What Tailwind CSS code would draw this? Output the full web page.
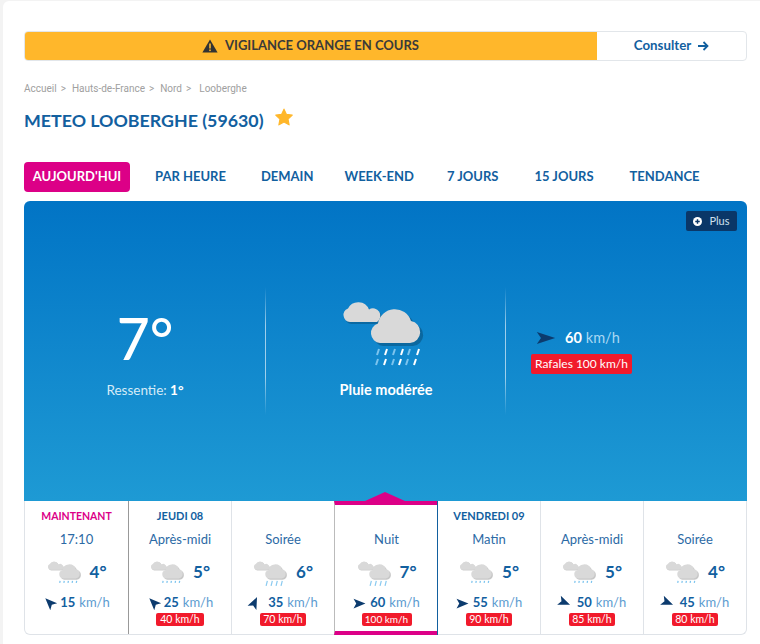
<!DOCTYPE html>
<html><head><meta charset="utf-8">
<script src="https://cdn.jsdelivr.net/npm/@tailwindcss/browser@4"></script>
</head>
<body class="bg-[#f3f3f3] overflow-hidden">
<svg width="0" height="0" class="absolute">
  <defs>
    <symbol id="c" viewBox="0 0 88 70">
      <path d="M8 21A7 7 0 0 1 6 7.500A11.500 11.500 0 0 1 27 8.500A6.500 6.500 0 0 1 35 21z" transform="translate(1.500 2)" fill="#000" fill-opacity=".2"/>
      <path d="M8 21A7 7 0 0 1 6 7.500A11.500 11.500 0 0 1 27 8.500A6.500 6.500 0 0 1 35 21z" fill="#d9d9d9"/>
      <path d="M38 42A10 10 0 0 1 36 22.500A17 17 0 0 1 69 20A11.100 11.100 0 0 1 68 42z" transform="translate(3 3)" fill="#000" fill-opacity=".22"/>
      <path d="M38 42A10 10 0 0 1 36 22.500A17 17 0 0 1 69 20A11.100 11.100 0 0 1 68 42z" fill="#d9d9d9"/>
    </symbol>
    <symbol id="s1" viewBox="0 0 88 70">
      <use href="#c" width="88" height="70"/>
      <path d="M31 48 30 53M41 48 40 53M51 48 50 53M61 48 60 53M71 48 70 53" stroke="#7cc4ee" stroke-width="3"/>
    </symbol>
    <symbol id="s2" viewBox="0 0 88 70">
      <use href="#c" width="88" height="70"/>
      <path d="M34 48 31 60M46 48 43 60M58 48 55 60M70 48 67 60" stroke="#8ccbf0" stroke-width="3"/>
    </symbol>
    <symbol id="a" viewBox="0 0 24 24">
      <path d="M1 3 23 12 1 21 6 12z" fill="#0c3b6e"/>
    </symbol>
  </defs>
</svg>
<div class="ml-[3px] mt-[1px] h-[643px] bg-white rounded-tl-md pl-[21px] pr-[13px] pt-[30px] font-['Lato',sans-serif]">

  <div class="flex h-[30px] w-[723px] rounded border border-[#e2e6ea] overflow-hidden">
    <div class="w-[573px] -my-px -ml-px bg-[#ffb72b] flex items-center justify-center gap-[7px] text-[#3a3a3a] text-[13px] font-bold">
      <svg width="16" height="14" viewBox="0 0 16 14"><path d="M8 0.500 15.600 13.600H0.400z" fill="#333"/><rect x="7.200" y="4.500" width="1.600" height="5" fill="#ffb72b"/><rect x="7.200" y="10.500" width="1.600" height="1.600" fill="#ffb72b"/></svg>
      <span>VIGILANCE ORANGE EN COURS</span>
    </div>
    <div class="flex-1 flex items-center justify-center gap-[6px] text-[#12609f] text-[13.300px] font-bold">
      <span>Consulter</span>
      <svg width="12" height="12" viewBox="0 0 12 12" fill="none" stroke="#12609f" stroke-width="1.800"><path d="M1 6h9.500M6.500 2l4 4-4 4"/></svg>
    </div>
  </div>

  <div class="mt-[20px] h-[14px] flex items-center text-[10px] text-[#a0a0a0] font-['Roboto',sans-serif]">
    <span>Accueil</span><span class="ml-[4px] mr-[6px]">&gt;</span><span>Hauts-de-France</span><span class="ml-[4px] mr-[6px]">&gt;</span><span>Nord</span><span class="ml-[4px] mr-[8px]">&gt;</span><span>Looberghe</span>
  </div>

  <div class="mt-[13px] h-[24px] flex items-start">
    <h1 class="w-[242px] whitespace-nowrap text-[17.800px] leading-[24px] font-bold text-[#12609f]">METEO LOOBERGHE (59630)</h1>
    <svg class="ml-[9px]" width="18" height="18" viewBox="0 0 24 24"><path d="M12 1.500 15.300 8.500 23 9.500 17.400 14.800 18.800 22.500 12 18.800 5.200 22.500 6.600 14.800 1 9.500 8.700 8.500z" fill="#ffb72b" stroke="#ffb72b" stroke-width="1.500" stroke-linejoin="round"/></svg>
  </div>

  <nav class="mt-[30px] flex items-center h-[30px] text-[13px] font-bold text-[#12609f]">
    <span class="h-[30px] w-[106px] rounded bg-[#dc0087] text-white flex items-center justify-center">AUJOURD'HUI</span>
    <span class="ml-[25px]">PAR HEURE</span>
    <span class="ml-[35px]">DEMAIN</span>
    <span class="ml-[31px]">WEEK-END</span>
    <span class="ml-[33px]">7 JOURS</span>
    <span class="ml-[36px]">15 JOURS</span>
    <span class="ml-[36px]">TENDANCE</span>
  </nav>

  <section class="relative mt-[9px] w-[723px] h-[300px] rounded-t-md bg-gradient-to-b from-[#0274c5] to-[#1e9ad4] text-white">
    <div class="absolute right-[10px] top-[10px] h-[20px] w-[51px] rounded-[2px] bg-[#0a3768] flex items-center justify-center gap-[7px] text-[11px] text-[#cfe0ee]">
      <svg width="9" height="9" viewBox="0 0 10 10"><circle cx="5" cy="5" r="5" fill="#fff"/><path d="M5 2.500v5M2.500 5h5" stroke="#0a3768" stroke-width="1.600"/></svg>
      <span>Plus</span>
    </div>
    <div class="pt-[86px] flex h-[214px]">
      <div class="w-[242px] h-[128px] flex flex-col items-center pt-[20px] bg-[linear-gradient(#fff0,#ffffff99_30%,#ffffff99_70%,#fff0)] bg-no-repeat bg-right bg-[length:1px_100%]">
        <div class="text-[57px] leading-[62px] font-medium text-white">7°</div>
        <div class="mt-[13px] text-[13.500px] leading-[16px] text-[#d6ebf7]">Ressentie: <b class="text-white">1°</b></div>
      </div>
      <div class="w-[240px] h-[128px] flex flex-col items-center bg-[linear-gradient(#fff0,#ffffff99_30%,#ffffff99_70%,#fff0)] bg-no-repeat bg-right bg-[length:1px_100%]">
        <div class="relative w-[88px] h-[70px] mt-[14px]">
          <svg class="absolute left-0 top-0" width="88" height="70"><use href="#c"/></svg>
          <svg class="absolute left-[33px] top-[47px]" width="48" height="18" viewBox="0 0 48 18" stroke-width="2">
            <g stroke="#7cc4ee"><path d="M4 1 2 7M20 1 18 7M35 1 33 7M3 11 1 17M19 11 17 17M33 11 31 17"/></g>
            <g stroke="#fff"><path d="M12 1 10 7M28 1 26 7M44 1 42 7M11 11 9 17M26 11 24 17M41 11 39 17"/></g>
          </svg>
        </div>
        <div class="mt-[10px] text-[14.500px] leading-[18px] font-bold">Pluie modérée</div>
      </div>
      <div class="flex-1 pl-[25px] pt-[42px]">
        <div class="flex items-center h-[18px] pl-[5px] text-[14.500px]">
          <svg width="20" height="16" viewBox="0 0 24 24" preserveAspectRatio="none"><use href="#a"/></svg>
          <b class="ml-[9px]">60</b><span class="ml-[4px] text-[#a9d8f3]">km/h</span>
        </div>
        <div class="mt-[7px] w-[101px] h-[20px] rounded-[2px] bg-[#f11a2b] text-[12px] leading-[20px] text-center whitespace-nowrap">Rafales 100 km/h</div>
      </div>
    </div>
    <svg class="absolute left-[341px] bottom-0" width="40" height="9" viewBox="0 0 40 9"><path d="M0 9 20 0 40 9z" fill="#dc0087"/></svg>
  </section>

  <div class="w-[723px] h-[134px] grid grid-cols-7 border border-t-0 border-[#dfe3e8] rounded-b-md text-center">
    <div class="h-[133px] pt-[7px]">
      <div class="text-[10.500px] leading-[16px] font-bold text-[#dc0087]">MAINTENANT</div>
      <div class="mt-[7px] text-[13px] leading-[16px] text-[#2c6aa5]">17:10</div>
      <div class="mt-[10px] h-[30px] flex items-center justify-center gap-[6px]"><svg class="mt-[6px]" width="37" height="29"><use href="#s1"/></svg><span class="text-[17px] font-bold text-[#12609f]">4°</span></div>
      <div class="mt-[8px] h-[16px] flex items-center justify-center gap-[4px] text-[13px]"><svg class="rotate-[225deg] -mt-[2px]" width="13" height="13"><use href="#a"/></svg><b class="text-[#12609f]">15</b><span class="text-[#5b9bd0]">km/h</span></div>
    </div>
    <div class="h-[133px] pt-[7px] border-l border-[#999]">
      <div class="text-[11px] leading-[16px] font-bold text-[#12609f]">JEUDI 08</div>
      <div class="mt-[7px] text-[13px] leading-[16px] text-[#2c6aa5]">Après-midi</div>
      <div class="mt-[10px] h-[30px] flex items-center justify-center gap-[6px]"><svg class="mt-[6px]" width="37" height="29"><use href="#s1"/></svg><span class="text-[17px] font-bold text-[#12609f]">5°</span></div>
      <div class="mt-[8px] h-[16px] flex items-center justify-center gap-[4px] text-[13px]"><svg class="rotate-[225deg] -mt-[2px]" width="13" height="13"><use href="#a"/></svg><b class="text-[#12609f]">25</b><span class="text-[#5b9bd0]">km/h</span></div>
      <div class="mt-[2px] mx-auto w-[48px] h-[13px] rounded-[2px] bg-[#f11a2b] text-white text-[10.500px] leading-[13px]">40 km/h</div>
    </div>
    <div class="h-[133px] pt-[7px] border-l border-[#dfe3e8]">
      <div class="h-[16px]"></div>
      <div class="mt-[7px] text-[13px] leading-[16px] text-[#2c6aa5]">Soirée</div>
      <div class="mt-[10px] h-[30px] flex items-center justify-center gap-[6px]"><svg class="mt-[6px]" width="37" height="29"><use href="#s2"/></svg><span class="text-[17px] font-bold text-[#12609f]">6°</span></div>
      <div class="mt-[8px] h-[16px] flex items-center justify-center gap-[4px] text-[13px]"><svg class="-rotate-[65deg] -mt-[1px]" width="13" height="13"><use href="#a"/></svg><b class="ml-[3px] text-[#12609f]">35</b><span class="text-[#5b9bd0]">km/h</span></div>
      <div class="mt-[2px] mx-auto w-[46px] h-[13px] rounded-[2px] bg-[#f11a2b] text-white text-[10.500px] leading-[13px]">70 km/h</div>
    </div>
    <div class="h-[134px] pt-[3px] border-l border-l-[#bbb] border-t-4 border-t-[#dc0087] border-b-4 border-b-[#dc0087] -mr-px">
      <div class="h-[16px]"></div>
      <div class="mt-[7px] text-[13px] leading-[16px] text-[#2c6aa5]">Nuit</div>
      <div class="mt-[10px] h-[30px] flex items-center justify-center gap-[6px]"><svg class="mt-[6px]" width="37" height="29"><use href="#s2"/></svg><span class="text-[17px] font-bold text-[#12609f]">7°</span></div>
      <div class="mt-[8px] h-[16px] flex items-center justify-center gap-[4px] text-[13px]"><svg width="13" height="13"><use href="#a"/></svg><b class="text-[#12609f]">60</b><span class="text-[#5b9bd0]">km/h</span></div>
      <div class="mt-[2px] mx-auto w-[50px] h-[13px] rounded-[2px] bg-[#f11a2b] text-white text-[10px] leading-[13px]">100 km/h</div>
    </div>
    <div class="relative h-[134px] pt-[7px] border-l border-l-[#12609f]">
      <div class="text-[11px] leading-[16px] font-bold text-[#12609f]">VENDREDI 09</div>
      <div class="mt-[7px] text-[13px] leading-[16px] text-[#2c6aa5]">Matin</div>
      <div class="mt-[10px] h-[30px] flex items-center justify-center gap-[6px]"><svg class="mt-[6px]" width="37" height="29"><use href="#s1"/></svg><span class="text-[17px] font-bold text-[#12609f]">5°</span></div>
      <div class="mt-[8px] h-[16px] flex items-center justify-center gap-[4px] text-[13px]"><svg width="13" height="13"><use href="#a"/></svg><b class="text-[#12609f]">55</b><span class="text-[#5b9bd0]">km/h</span></div>
      <div class="mt-[2px] mx-auto w-[46px] h-[13px] rounded-[2px] bg-[#f11a2b] text-white text-[10.500px] leading-[13px]">90 km/h</div>
    </div>
    <div class="h-[133px] pt-[7px] border-l border-[#dfe3e8]">
      <div class="h-[16px]"></div>
      <div class="mt-[7px] text-[13px] leading-[16px] text-[#2c6aa5]">Après-midi</div>
      <div class="mt-[10px] h-[30px] flex items-center justify-center gap-[6px]"><svg class="mt-[6px]" width="37" height="29"><use href="#s1"/></svg><span class="text-[17px] font-bold text-[#12609f]">5°</span></div>
      <div class="mt-[8px] h-[16px] flex items-center justify-center gap-[4px] text-[13px]"><svg class="rotate-[22deg] -mt-[2px]" width="13" height="13"><use href="#a"/></svg><b class="ml-[2px] text-[#12609f]">50</b><span class="text-[#5b9bd0]">km/h</span></div>
      <div class="mt-[2px] mx-auto w-[46px] h-[13px] rounded-[2px] bg-[#f11a2b] text-white text-[10.500px] leading-[13px]">85 km/h</div>
    </div>
    <div class="h-[133px] pt-[7px] border-l border-[#dfe3e8]">
      <div class="h-[16px]"></div>
      <div class="mt-[7px] text-[13px] leading-[16px] text-[#2c6aa5]">Soirée</div>
      <div class="mt-[10px] h-[30px] flex items-center justify-center gap-[6px]"><svg class="mt-[6px]" width="37" height="29"><use href="#s1"/></svg><span class="text-[17px] font-bold text-[#12609f]">4°</span></div>
      <div class="mt-[8px] h-[16px] flex items-center justify-center gap-[4px] text-[13px]"><svg class="rotate-[22deg] -mt-[2px]" width="13" height="13"><use href="#a"/></svg><b class="ml-[2px] text-[#12609f]">45</b><span class="text-[#5b9bd0]">km/h</span></div>
      <div class="mt-[2px] mx-auto w-[46px] h-[13px] rounded-[2px] bg-[#f11a2b] text-white text-[10.500px] leading-[13px]">80 km/h</div>
    </div>
  </div>
</div>
</body></html>
